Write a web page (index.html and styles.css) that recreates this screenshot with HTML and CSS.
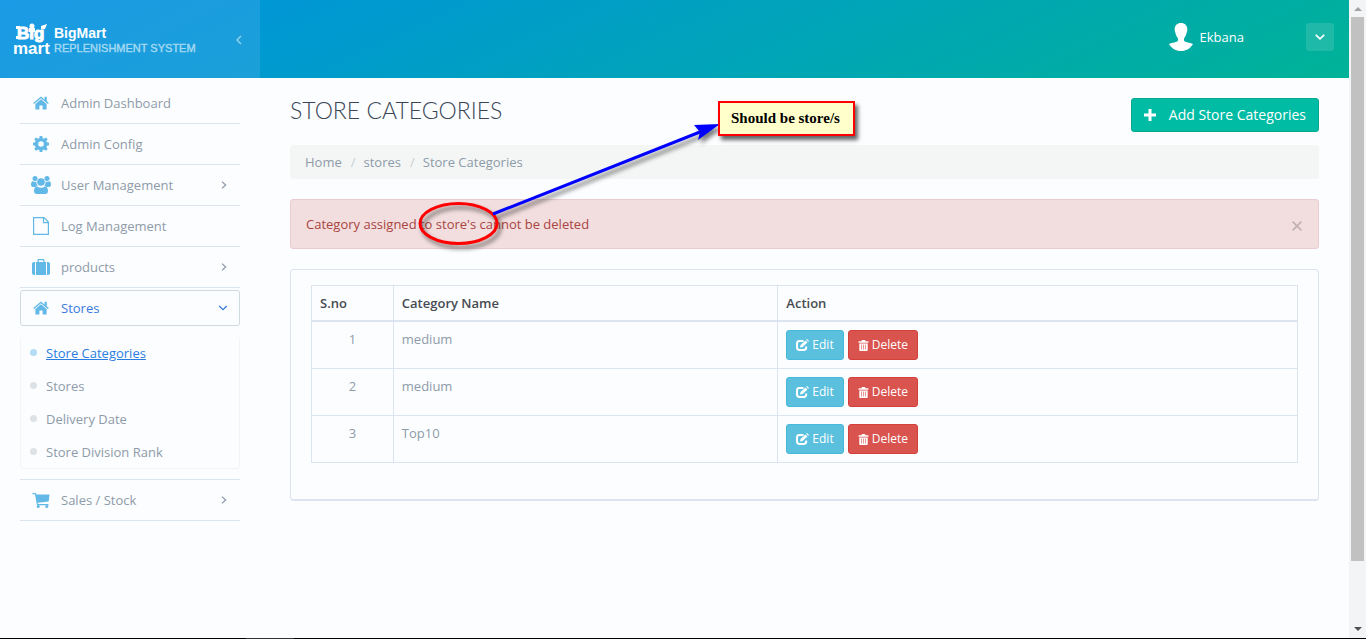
FILE: index.html
```html
<!DOCTYPE html>
<html lang="en">
<head>
<meta charset="utf-8">
<title>Store Categories</title>
<link rel="stylesheet" href="styles.css">
</head>
<body>
<svg class="defs" aria-hidden="true">
  <symbol id="home" viewBox="0 0 16 14"><path d="M8 0.4 0.2 7l.9 1L8 2.2 14.900 8l.9-1L13.800 5.300V.8h-2.200v2.600z"/><path d="M8 3.300 2.400 8v5.600h4V9.400h3.200v4.200h4V8z"/></symbol>
  <symbol id="gear" viewBox="0 0 16 16"><path fill-rule="evenodd" d="M6.700 0h2.600l.4 2.200 1.300.5L12.900 1.400l1.800 1.800L13.400 5l.5 1.300 2.100.4v2.600l-2.100.4-.5 1.300 1.300 1.900-1.800 1.800L11 13.400l-1.300.5L9.300 16H6.700l-.4-2.100L5 13.400l-1.900 1.300-1.800-1.800L2.600 11l-.5-1.300L0 9.300V6.700l2.100-.4L2.600 5 1.300 3.200l1.800-1.800L5 2.700l1.300-.5zM8 5.200a2.800 2.800 0 1 0 0 5.600 2.800 2.800 0 0 0 0-5.600z"/></symbol>
  <symbol id="users" viewBox="0 0 20 18"><circle cx="4" cy="2.500" r="2.500"/><circle cx="16" cy="2.500" r="2.500"/><circle cx="10" cy="6" r="3.800"/><path d="M0 8.500C0 6.500.8 5.200 1.800 5.200c1 .7 2.700.9 3.700.3C5.200 7.300 5.700 8.800 6.800 9.900c-1 0-1.900.3-2.500 1H2C.7 10.900 0 10.200 0 8.500zM20 8.500c0-2-.8-3.300-1.800-3.300-1 .7-2.700.9-3.700.3.300 1.800-.2 3.300-1.300 4.400 1 0 1.900.3 2.500 1H18c1.300 0 2-.7 2-2.400z"/><path d="M3 15c0-2.700 1-4.600 3.200-4.600 2.300 1.700 5.300 1.700 7.600 0C16 10.400 17 12.300 17 15c0 2-1.200 3-2.700 3H5.700C4.200 18 3 17 3 15z"/></symbol>
  <symbol id="file" viewBox="0 0 16 18"><path fill="none" stroke="currentColor" stroke-width="1.200" d="M.6.600h10.400l4.400 4.500v12.300H.6zM10.500.6v5h5"/></symbol>
  <symbol id="case" viewBox="0 0 18 16"><path fill-rule="evenodd" d="M4 3h1.500V1.200C5.500.5 6 0 6.700 0h4.600c.7 0 1.200.5 1.200 1.200V3H14v13H4zm2.700 0h4.600V1.300H6.700z"/><path d="M3 3H2C.8 3 0 3.800 0 5v9c0 1.200.8 2 2 2h1zM15 3h1c1.200 0 2 .8 2 2v9c0 1.200-.8 2-2 2h-1z"/></symbol>
  <symbol id="cart" viewBox="0 0 17 15"><path d="M0 0h3.400l.4 1.500H17l-.8 7-11 1.300.3 1.200H16v1.200H4.500L2.500 1.300H0z"/><circle cx="5.700" cy="13.400" r="1.500"/><circle cx="14.300" cy="13.400" r="1.500"/></symbol>
  <symbol id="right" viewBox="0 0 6 8"><path fill="none" stroke="currentColor" stroke-width="1.300" d="M1 .6 4.600 4 1 7.400"/></symbol>
  <symbol id="down" viewBox="0 0 10 6"><path fill="none" stroke="currentColor" stroke-width="1.300" d="M1.200 1 5 4.600 8.800 1"/></symbol>
  <symbol id="edit" viewBox="0 0 13 12"><path fill="none" stroke="currentColor" stroke-width="2" d="M7.500 2H3.600C2 2 1 2.800 1 4.400v4.200C1 10.200 2 11 3.600 11h4.200c1.600 0 2.400-.8 2.400-2.400V7.600"/><path d="M4 8.600 4.600 6 9.500 1.400l2 2L6.600 8zM10.200.8 11 0l2 2-.8.800z"/></symbol>
  <symbol id="trash" viewBox="0 0 10 11"><path fill-rule="evenodd" d="M3 1.200C3 .5 3.500 0 4.200 0h1.600C6.500 0 7 .5 7 1.200h2.400c.4 0 .6.3.6.6v1H0v-1c0-.3.2-.6.6-.6zM.8 3.400h8.400V10c0 .6-.4 1-1 1H1.800c-.6 0-1-.4-1-1zM2.600 4.500v5h.6v-5zm2.100 0v5h.6v-5zm2.100 0v5h.6v-5z"/></symbol>
</svg>
<div class="window">
  <div class="app">
    <header class="topbar">
      <div class="brand">
        <svg class="logo" viewBox="0 0 39 32" role="img" aria-label="Big mart"><text x="4" y="16" class="logo-big">Big</text><circle cx="19" cy="3" r="2.500"/><path d="M16 5h6v4h-6zM3 3h4v3H3zM3 13h4v3H3zM28 3l6-2-2 5h-4z"/><text x="0" y="31" class="logo-mart">mart</text></svg>
        <div class="brand-text"><strong>BigMart</strong><span>REPLENISHMENT SYSTEM</span></div>
        <button class="collapse" aria-label="Collapse menu"><svg viewBox="0 0 8 10"><path fill="none" stroke="currentColor" stroke-width="1.500" d="M6 1 2 5l4 4"/></svg></button>
      </div>
      <div class="user">
        <svg class="avatar" viewBox="0 0 24 28"><path d="M12 0c4 0 6.300 2.600 6.300 6.500 0 1.500-.2 2.400-.7 3.300-.5 2.700-1.400 4.300-2.600 5.400v2.200c1 2 5.500 1.800 9 3.600C21.500 25.500 17 28 12 28S2.500 25.500 0 21c3.500-1.800 8-1.600 9-3.600v-2.200C7.800 14.100 6.900 12.500 6.400 9.800 5.900 8.900 5.700 8 5.700 6.500 5.700 2.600 8 0 12 0z"/></svg>
        <span>Ekbana</span>
        <button class="user-menu" aria-label="User menu"><svg viewBox="0 0 10 6"><path fill="none" stroke="currentColor" stroke-width="1.700" d="M.8.800 5 4.800 9.200.8"/></svg></button>
      </div>
    </header>
    <div class="body">
      <nav class="sidebar">
        <a href="#" class="item"><svg class="ico home"><use href="#home"/></svg><span>Admin Dashboard</span></a>
        <a href="#" class="item"><svg class="ico gear"><use href="#gear"/></svg><span>Admin Config</span></a>
        <a href="#" class="item"><svg class="ico users"><use href="#users"/></svg><span>User Management</span><svg class="right"><use href="#right"/></svg></a>
        <a href="#" class="item"><svg class="ico file"><use href="#file"/></svg><span>Log Management</span></a>
        <a href="#" class="item"><svg class="ico case"><use href="#case"/></svg><span>products</span><svg class="right"><use href="#right"/></svg></a>
        <a href="#" class="item open"><svg class="ico home"><use href="#home"/></svg><span>Stores</span><svg class="down"><use href="#down"/></svg></a>
        <ul class="sub">
          <li class="current"><a href="#">Store Categories</a></li>
          <li><a href="#">Stores</a></li>
          <li><a href="#">Delivery Date</a></li>
          <li><a href="#">Store Division Rank</a></li>
        </ul>
        <a href="#" class="item after-sub"><svg class="ico cart"><use href="#cart"/></svg><span>Sales / Stock</span><svg class="right"><use href="#right"/></svg></a>
      </nav>
      <main class="main">
        <div class="heading">
          <h1>STORE CATEGORIES</h1>
          <button class="add"><svg viewBox="0 0 12 12"><path d="M4.500 0h3v4.500H12v3H7.500V12h-3V7.500H0v-3h4.500z"/></svg>Add Store Categories</button>
        </div>
        <ol class="crumbs">
          <li><a href="#">Home</a></li>
          <li><a href="#">stores</a></li>
          <li>Store Categories</li>
        </ol>
        <div class="alert" role="alert"><span>Category assigned to store's cannot be deleted</span><button class="close" aria-label="Close"><svg viewBox="0 0 10 10"><path fill="none" stroke="currentColor" stroke-width="1.800" d="m.6.600 8.800 8.800M9.400.6.6 9.400"/></svg></button></div>
        <section class="panel">
          <table>
            <thead><tr><th class="c-no">S.no</th><th class="c-name">Category Name</th><th>Action</th></tr></thead>
            <tbody>
              <tr><td class="num">1</td><td>medium</td><td><div class="actions"><button class="btn edit"><svg><use href="#edit"/></svg>Edit</button><button class="btn delete"><svg><use href="#trash"/></svg>Delete</button></div></td></tr>
              <tr><td class="num">2</td><td>medium</td><td><div class="actions"><button class="btn edit"><svg><use href="#edit"/></svg>Edit</button><button class="btn delete"><svg><use href="#trash"/></svg>Delete</button></div></td></tr>
              <tr><td class="num">3</td><td>Top10</td><td><div class="actions"><button class="btn edit"><svg><use href="#edit"/></svg>Edit</button><button class="btn delete"><svg><use href="#trash"/></svg>Delete</button></div></td></tr>
            </tbody>
          </table>
        </section>
      </main>
    </div>
  </div>
  <div class="scrollbar" aria-hidden="true"><i class="up"></i><i class="thumb"></i><i class="dn"></i></div>
</div>
<div class="taskbar"><i></i></div>
<svg class="markup" viewBox="0 0 460 160" aria-hidden="true">
  <ellipse cx="58.500" cy="133.500" rx="38.500" ry="20" fill="none" stroke="#f00" stroke-width="3"/>
  <path d="M93 124 305 40" stroke="#00f" stroke-width="3"/>
  <path d="m320 34-26 1 6 7-2 8z" fill="#00f"/>
</svg>
<div class="note">Should be store/s</div>
</body>
</html>
```
FILE: styles.css
```css
* { box-sizing: border-box; }
body {
  margin: 0;
  height: 100vh;
  display: flex;
  flex-direction: column;
  position: relative;
  overflow: hidden;
  background: #fcfdff;
  color: #8e9ba8;
  font: 13px/18px "Open Sans", sans-serif;
}
a { color: inherit; text-decoration: none; }
button { font: inherit; cursor: pointer; border: 0; padding: 0; margin: 0; }
svg { fill: currentColor; flex: none; display: block; }
.defs { position: absolute; width: 0; height: 0; }
ul, ol { list-style: none; margin: 0; padding: 0; }

.window { flex: 1; display: flex; min-height: 0; }
.app { flex: 1; min-width: 0; }

.topbar {
  height: 78px;
  display: flex;
  justify-content: space-between;
  background: linear-gradient(155deg, #0095da 12%, #00b396 102%);
  color: #fff;
}
.brand {
  width: 260px;
  padding: 0 15px 0 13px;
  display: flex;
  align-items: center;
  background: linear-gradient(155deg, #1b9ae5, #1ba0d8);
}
.logo { width: 39px; height: 32px; overflow: visible; }
.logo-big { font: bold 17px "Liberation Sans", sans-serif; stroke: #fff; }
.logo-mart { font: bold 17px "Liberation Sans", sans-serif; }
.brand-text {
  margin-left: 2px;
  display: flex;
  flex-direction: column;
  font-family: "Liberation Sans", sans-serif;
  line-height: 15px;
  padding-top: 3px;
}
.brand-text strong { font-size: 14px; }
.brand-text span { font-size: 11px; color: #a4d9f3; -webkit-text-stroke: 0.4px; }
.collapse { margin-left: auto; background: none; color: #8fd2ee; padding: 4px 2px 2px; }
.collapse svg { width: 8px; height: 10px; }
.user { display: flex; align-items: center; padding: 0 15px 4px 0; }
.avatar { width: 24px; height: 28px; margin-right: 7px; }
.user-menu {
  width: 28px; height: 28px;
  margin-left: 62px;
  display: grid;
  place-items: center;
  border-radius: 3px;
  background: rgba(255, 255, 255, .12);
  color: #fff;
}
.user-menu svg { width: 10px; height: 6px; }

.body { display: flex; }
.sidebar { width: 260px; padding: 5px 20px; }
.item {
  display: flex;
  align-items: center;
  height: 41px;
  padding: 0 13px 0 11px;
  border-bottom: 1px solid #dce4f0;
}
.item span { margin-left: 10px; flex: 1; }
.ico { color: #62b8e6; height: 18px; width: 20px; }
.ico.home { height: 14px; }
.ico.gear { height: 16px; }
.ico.case { height: 16px; }
.ico.cart { height: 15px; }
.right { width: 6px; height: 8px; }
.down { width: 10px; height: 6px; }
.item.open {
  height: 36px;
  margin: 2px 0 10px;
  padding: 0 11px 0 10px;
  border: 1px solid #cfdadf;
  border-radius: 3px;
  color: #3a7bdd;
}
.sub { border: 1px solid #f2f5f8; border-top: 0; border-radius: 4px; }
.sub li { height: 33px; display: flex; align-items: center; padding-left: 9px; }
.sub li::before {
  content: "";
  width: 7px; height: 7px;
  margin-right: 9px;
  border-radius: 50%;
  background: #dde2e6;
}
.sub .current { color: #2a7de0; }
.sub .current a { text-decoration: underline; }
.sub .current::before { background: #b5dcf5; }
.after-sub { margin-top: 10px; height: 42px; border-top: 1px solid #dce4f0; }

.main { flex: 1; min-width: 0; padding: 20px 30px; }
.heading { display: flex; justify-content: space-between; margin-bottom: 13px; }
h1 { margin: 0; font: 300 23px/24px Lato, sans-serif; color: #3a4656; }
.add {
  height: 34px;
  padding: 0 12px;
  display: flex;
  align-items: center;
  gap: 13px;
  border: 1px solid #05a890;
  border-radius: 3px;
  background: #00bca4;
  color: #fff;
  font-size: 14px;
}
.add svg { width: 12px; height: 12px; }
.crumbs {
  display: flex;
  padding: 8px 15px;
  border-radius: 4px;
  background: #f4f6f6;
}
.crumbs li + li::before { content: "/"; padding: 0 8px 0 9px; color: #c8ccd0; }
.alert {
  margin-top: 20px;
  padding: 0 16px 0 15px;
  height: 50px;
  display: flex;
  align-items: center;
  justify-content: space-between;
  border: 1px solid #ebccd1;
  border-radius: 3px;
  background: #f2dede;
  color: #a94442;
}
.close { background: none; color: #c2b2b2; padding-top: 3px; }
.close svg { width: 10px; height: 10px; }
.panel {
  margin-top: 20px;
  padding: 15px 20px 36px;
  border: 1px solid #dce4f0;
  border-bottom-width: 2px;
  border-radius: 4px;
}
table { width: 100%; border-collapse: collapse; table-layout: fixed; }
th, td {
  padding: 8px;
  border: 1px solid #dce4f0;
  text-align: left;
  vertical-align: top;
}
th { font-weight: 600; color: #474b51; border-bottom-width: 2px; }
.c-no { width: 8.300%; }
.c-name { width: 39%; }
td.num { text-align: center; }
.actions { display: flex; gap: 4px; }
.btn {
  height: 30px;
  padding: 0 9px;
  display: flex;
  align-items: center;
  gap: 3px;
  border: 1px solid;
  border-radius: 3px;
  color: #fff;
  font-size: 12px;
}
.edit { background: #5bc0de; border-color: #46b8da; }
.delete { background: #d9534f; border-color: #d43f3a; }
.edit svg { width: 13px; height: 12px; }
.delete svg { width: 11px; height: 11px; }

.scrollbar {
  width: 17px;
  display: flex;
  flex-direction: column;
  align-items: center;
  background: #f3f4f5;
}
.up, .dn { border: 4px solid transparent; border-top: 0; border-bottom: 4px solid #a3a3a3; margin: 7px 0 6px; }
.thumb { width: 13px; flex: 0 0 544px; background: #c1c1c1; }
.dn { border-bottom: 0; border-top: 4px solid #505050; margin: auto 0 7px; }
.taskbar { height: 1px; background: #000; padding-left: 18%; }
.taskbar i { display: block; width: 48px; height: 1px; background: #333; }

.markup {
  position: absolute;
  left: 400px; top: 90px;
  width: 460px; height: 160px;
  pointer-events: none;
  filter: drop-shadow(3px 4px 2px rgba(0, 0, 0, .5));
}
.note {
  position: absolute;
  left: 718px; top: 101px;
  padding: 7px 13px 8px 11px;
  border: 2px solid #f00;
  background: #ffc;
  box-shadow: 3px 4px 4px rgba(0, 0, 0, .6);
  color: #000;
  font: bold 15px/16px "Liberation Serif", serif;
}
```
